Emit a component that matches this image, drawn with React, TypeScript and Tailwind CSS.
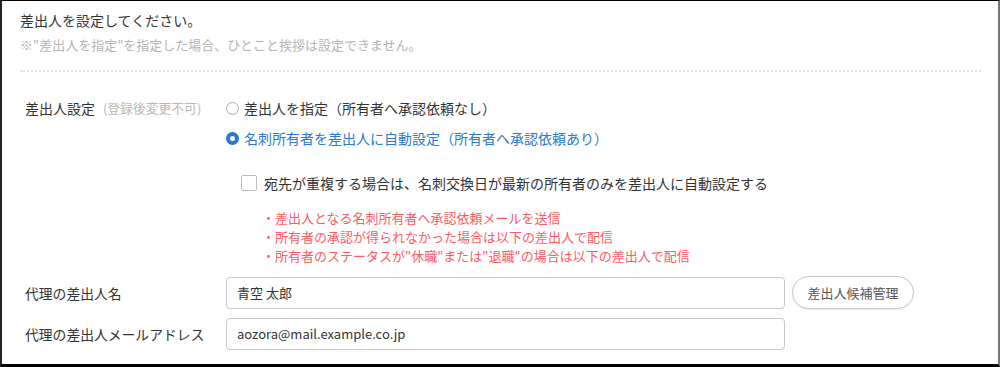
const font = { fontFamily: '"Noto Sans CJK JP", "Noto Sans", sans-serif' };

function Radio({ checked, label }: { checked?: boolean; label: string }) {
    return (
        <label className="flex items-center h-6 gap-[5px] select-none">
            {checked ? (
                <span className="w-[13px] h-[13px] rounded-full bg-[#2a78d0] flex items-center justify-center">
                    <span className="w-[5px] h-[5px] rounded-full bg-white"></span>
                </span>
            ) : (
                <span className="w-[13px] h-[13px] rounded-full border border-[#aaa] bg-white"></span>
            )}
            <span className={checked ? "text-[#2a78d0]" : "text-[#333]"}>{label}</span>
        </label>
    )
}

function FieldRow({ label, value, button }: { label: string; value: string; button?: string }) {
    return (
        <div className="flex items-center">
            <div className="w-[201px] text-[#333] text-[13.8px]">{label}</div>
            <div className="w-[559px] h-[32px] border border-[#c8c8cc] rounded-[4px] px-[10px] flex items-center text-[13px] text-[#333]">
                {value}
            </div>
            {button && (
                <div className="ml-[7px] w-[122px] h-[33px] border border-[#c4c4c8] rounded-full flex items-center justify-center text-[13px] text-[#555] shadow-[0_1px_1px_rgba(0,0,0,0.08)]">
                    {button}
                </div>
            )}
        </div>
    )
}

export default function App() {
    return (
        <div style={font} className="w-[1000px] h-[367px] bg-white border-t border-l-2 border-b-[3px] border-r-2 border-t-black border-l-[#222] border-b-black border-r-[#777] pl-[18px] pr-[17px] pt-[9px] text-[14px] leading-5 overflow-hidden">
            <div className="text-[#333] text-[14px]">差出人を設定してください。</div>
            <div className="mt-[5px] text-[#b4b4b4] text-[13px]">※"差出人を指定"を指定した場合、ひとこと挨拶は設定できません。</div>
            <div className="mt-[15px] border-t-2 border-dotted border-[#e0e0e0]"></div>

            <div className="pl-[5px] mt-[24px]">
                <div className="flex">
                    <div className="w-[201px] h-6 flex items-center text-[#333] text-[14px]">
                        差出人設定<span className="ml-[8px] text-[12.8px] text-[#b8b8b8]">(登録後変更不可)</span>
                    </div>
                    <div className="flex flex-col">
                        <Radio label="差出人を指定（所有者へ承認依頼なし）" />
                        <div className="mt-[6px]">
                            <Radio checked label="名刺所有者を差出人に自動設定（所有者へ承認依頼あり）" />
                        </div>
                        <div className="mt-[21px] ml-[15px] flex items-center h-6 gap-[7px]">
                            <span className="w-[16px] h-[16px] border border-[#bbb] rounded-[2px] bg-white"></span>
                            <span className="text-[#333]">宛先が重複する場合は、名刺交換日が最新の所有者のみを差出人に自動設定する</span>
                        </div>
                        <div className="mt-[13px] ml-[36px] text-[13px] leading-[19px] text-[#ff5a5f]">
                            <div>・差出人となる名刺所有者へ承認依頼メールを送信</div>
                            <div>・所有者の承認が得られなかった場合は以下の差出人で配信</div>
                            <div>・所有者のステータスが"休職"または"退職"の場合は以下の差出人で配信</div>
                        </div>
                    </div>
                </div>

                <div className="mt-[11px] flex flex-col gap-[9px]">
                    <FieldRow label="代理の差出人名" value="青空 太郎" button="差出人候補管理" />
                    <FieldRow label="代理の差出人メールアドレス" value="aozora@mail.example.co.jp" />
                </div>
            </div>
        </div>
    )
}
